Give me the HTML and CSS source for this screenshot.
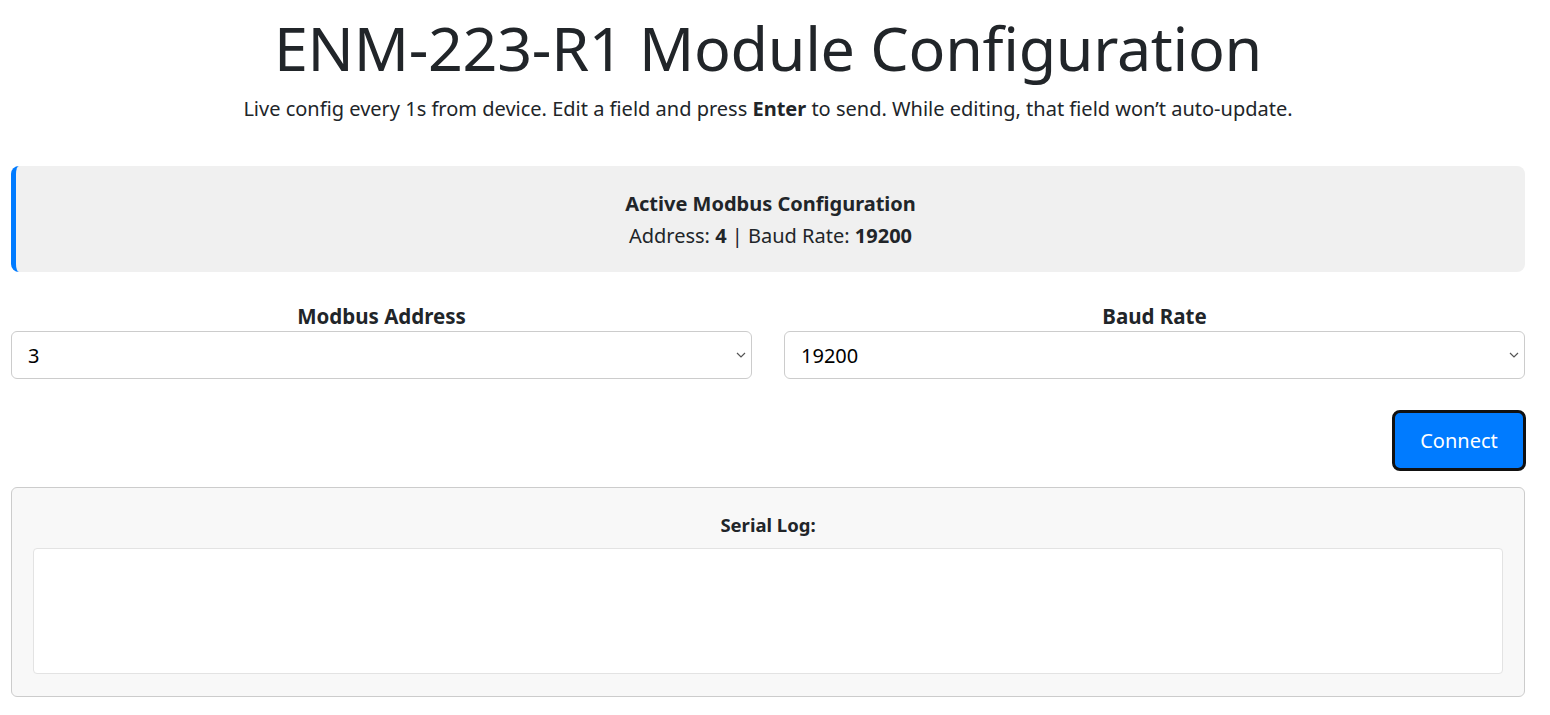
FILE: index.html
```html
<!DOCTYPE html>
<html lang="en">
<head>
    <meta charset="UTF-8">
    <meta name="viewport" content="width=device-width, initial-scale=1.0">
    <title>ENM-223-R1 Module Configuration</title>
    <link rel="stylesheet" href="styles.css">
</head>
<body>
    <div class="container">
        <h1>ENM-223-R1 Module Configuration</h1>
        <p class="subtitle">Live config every 1s from device. Edit a field and press <strong>Enter</strong> to send. While editing, that field won’t auto-update.</p>

        <div class="active-config">
            <div class="active-title">Active Modbus Configuration</div>
            <div class="active-values">Address: <strong id="activeAddress">4</strong> | Baud Rate: <strong id="activeBaud">19200</strong></div>
        </div>

        <div class="form-row">
            <div class="form-group">
                <label for="address">Modbus Address</label>
                <div class="select-wrap">
                    <select id="address">
                        <option>1</option>
                        <option>2</option>
                        <option selected>3</option>
                        <option>4</option>
                        <option>5</option>
                    </select>
                    <svg class="chevron" width="10" height="6" viewBox="0 0 10 6"><path d="M1 1l4 4 4-4" fill="none" stroke="#555" stroke-width="1.2"/></svg>
                </div>
            </div>
            <div class="form-group">
                <label for="baud">Baud Rate</label>
                <div class="select-wrap">
                    <select id="baud">
                        <option>4800</option>
                        <option>9600</option>
                        <option selected>19200</option>
                        <option>38400</option>
                        <option>115200</option>
                    </select>
                    <svg class="chevron" width="10" height="6" viewBox="0 0 10 6"><path d="M1 1l4 4 4-4" fill="none" stroke="#555" stroke-width="1.2"/></svg>
                </div>
            </div>
        </div>

        <div class="actions">
            <button id="connectBtn">Connect</button>
        </div>

        <div class="log-box">
            <div class="log-title">Serial Log:</div>
            <div id="log" class="log"></div>
        </div>
    </div>
</body>
</html>
```

FILE: styles.css
```css
body {
    font-family: "Noto Sans", "Open Sans", sans-serif;
    margin: 0;
    color: #212529;
    background-color: white;
}
.container {
    width: 1514px;
    margin-left: 11px;
}
h1 {
    font-family: "Noto Sans", sans-serif;
    font-weight: 400;
    font-size: 61px;
    letter-spacing: -0.3px;
    line-height: 72px;
    text-align: center;
    margin: 12px 0 0 0;
}
.subtitle {
    font-size: 20px;
    line-height: 30px;
    text-align: center;
    margin: 10px 0 0 0;
}
.subtitle strong {
    font-weight: 700;
}
.active-config {
    margin-top: 42px;
    background-color: #f0f0f0;
    border-left: 5px solid #007bff;
    border-radius: 8px;
    padding: 22px 10px 22px 10px;
    text-align: center;
    font-size: 20px;
    height: 106px;
    box-sizing: border-box;
}
.active-title {
    font-weight: 700;
    line-height: 32px;
}
.active-values {
    line-height: 32px;
}
.form-row {
    display: flex;
    gap: 32px;
    margin-top: 28px;
}
.form-group {
    flex: 1;
}
label {
    display: block;
    text-align: center;
    font-weight: 700;
    font-size: 20.5px;
    line-height: 32px;
    margin-bottom: -1px;
}
.select-wrap {
    position: relative;
}
select {
    appearance: none;
    -webkit-appearance: none;
    width: 100%;
    height: 48px;
    padding: 0 16px;
    font-family: inherit;
    font-size: 20px;
    color: #000;
    background-color: white;
    border: 1px solid #ccc;
    border-radius: 6px;
    box-sizing: border-box;
}
.chevron {
    position: absolute;
    right: 6px;
    top: 21px;
    pointer-events: none;
}
.actions {
    display: flex;
    justify-content: flex-end;
    margin-top: 31px;
}
button {
    width: 134px;
    height: 61px;
    background-color: #007bff;
    color: white;
    font-family: inherit;
    font-size: 20px;
    border: 3px solid #111;
    border-radius: 8px;
    cursor: pointer;
    margin-right: -1px;
}
.log-box {
    margin-top: 16px;
    background-color: #f8f8f8;
    border: 1px solid #ccc;
    border-radius: 6px;
    padding: 21px 21px 21px 21px;
    height: 210px;
    box-sizing: border-box;
}
.log-title {
    text-align: center;
    font-weight: 700;
    font-size: 18.5px;
    line-height: 32px;
    margin-bottom: 7px;
}
.log {
    background-color: white;
    border: 1px solid #e3e3e3;
    border-radius: 4px;
    height: 126px;
    box-sizing: border-box;
}
```
